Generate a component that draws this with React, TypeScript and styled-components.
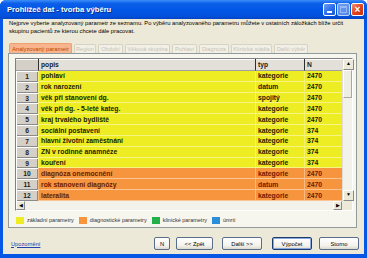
import { Fragment } from "react";
import styled, { createGlobalStyle } from "styled-components";

const GlobalStyle = createGlobalStyle`
  html, body {
    margin: 0;
    padding: 0;
    background: #ffffff;
  }
  body {
    font-family: "Liberation Sans", Arial, sans-serif;
  }
`;

const Window = styled.div`
  width: 367px;
  height: 258px;
  display: flex;
  flex-direction: column;
  border-radius: 6px 6px 0 0;
  overflow: hidden;
  background: #0757e6;
`;

const TitleBar = styled.div`
  height: 19px;
  flex: none;
  display: flex;
  align-items: center;
  padding: 0 3px 0 7px;
  background: linear-gradient(#3c8ef8 0%, #0b5fe9 18%, #0256e5 55%, #0150dc 85%, #0444c4 100%);
`;

const Title = styled.div`
  flex: 1;
  color: #ffffff;
  font-size: 7.6px;
  font-weight: bold;
  text-shadow: 1px 1px 0 #0a2d8c;
  white-space: nowrap;
`;

const CaptionButtons = styled.div`
  display: flex;
  gap: 1px;
`;

const CaptionButton = styled.div<{ $kind: "min" | "max" | "close" }>`
  width: 13px;
  height: 13px;
  box-sizing: border-box;
  border: 1px solid #ffffff;
  border-radius: 2px;
  position: relative;
  background: ${(p) =>
    p.$kind === "close"
      ? "linear-gradient(135deg, #f09070, #e0451c 50%, #c83010)"
      : p.$kind === "max"
      ? "linear-gradient(135deg, #8fb4f4, #6b98ec)"
      : "linear-gradient(135deg, #6fa0f6, #2a6be8 55%, #1d58d8)"};
  opacity: ${(p) => (p.$kind === "max" ? 0.75 : 1)};
`;

const MinBar = styled.div`
  position: absolute;
  left: 3px;
  bottom: 2px;
  width: 5px;
  height: 2px;
  background: #ffffff;
`;

const MaxBox = styled.div`
  position: absolute;
  left: 2px;
  top: 2px;
  width: 7px;
  height: 7px;
  box-sizing: border-box;
  border: 1px solid #c8d8f8;
  border-top-width: 2px;
`;

const CloseX = styled.div`
  position: absolute;
  inset: 0;
  color: #ffffff;
  font-size: 10px;
  font-weight: bold;
  line-height: 11px;
  text-align: center;
`;

const Frame = styled.div`
  flex: 1;
  display: flex;
  padding: 0 3px 4px 3px;
  background: #0757e6;
`;

const Body = styled.div`
  flex: 1;
  display: flex;
  flex-direction: column;
  background: #ece9d8;
  padding: 0 7px 0 5px;
`;

const Intro = styled.div`
  font-size: 5.8px;
  line-height: 8px;
  color: #000000;
  padding-left: 1px;
  white-space: nowrap;
`;

const Tabs = styled.div`
  display: flex;
  align-items: flex-end;
  height: 10px;
  margin-top: 8px;
  padding-left: 1px;
`;

const Tab = styled.div<{ $active?: boolean; $w: number }>`
  width: ${(p) => p.$w}px;
  height: ${(p) => (p.$active ? 10 : 9)}px;
  box-sizing: border-box;
  margin-right: 2px;
  font-size: 5.7px;
  line-height: ${(p) => (p.$active ? 10 : 9)}px;
  text-align: center;
  white-space: nowrap;
  border: 1px solid ${(p) => (p.$active ? "#f0a070" : "#d6d2c4")};
  border-bottom: none;
  border-radius: 2px 2px 0 0;
  background: ${(p) => (p.$active ? "#f8b48c" : "#f2f0e6")};
  color: ${(p) => (p.$active ? "#c04400" : "#c6c2b6")};
`;

const Panel = styled.div`
  height: 175px;
  box-sizing: border-box;
  border: 1px solid #919b9c;
  background: #f6f5ee;
  padding: 4px 3px 0 6px;
  display: flex;
  flex-direction: column;
`;

const Grid = styled.div`
  width: 338px;
  height: 153px;
  box-sizing: border-box;
  border: 1px solid;
  border-color: #808080 #ffffff #ffffff #808080;
  display: flex;
  flex-direction: column;
  background: #ffffff;
`;

const GridMain = styled.div`
  display: flex;
  height: 142px;
`;

const Table = styled.div`
  flex: 1;
  display: grid;
  grid-template-columns: 22px 217px 49px 1fr;
  grid-template-rows: 12px repeat(12, 1fr);
  background: #ffffff;
`;

const HeadCell = styled.div<{ $first?: boolean }>`
  background: ${(p) => (p.$first ? "#d4d0c8" : "#e2e0d9")};
  border-left: ${(p) => (p.$first ? "none" : "1px solid #303030")};
  border-bottom: 1px solid #a0a0a0;
  box-shadow: inset 0 1px 0 #ffffff;
  font-size: 6.7px;
  font-weight: bold;
  color: #202020;
  line-height: 11px;
  padding-left: 2px;
  white-space: nowrap;
`;

const NumCell = styled.div`
  background: #d4d0c8;
  box-shadow: inset 1px 1px 0 #ffffff, inset -1px -1px 0 #8a8a8a;
  font-size: 6.7px;
  font-weight: bold;
  color: #202020;
  display: flex;
  align-items: center;
  justify-content: center;
`;

const Cell = styled.div<{ $tone: "base" | "diag" }>`
  background: ${(p) => (p.$tone === "base" ? "#eeec22" : "#f6953e")};
  color: ${(p) => (p.$tone === "base" ? "#222200" : "#6e1a00")};
  border-bottom: 1px solid rgba(255, 255, 255, 0.45);
  border-left: 1px solid rgba(255, 255, 255, 0.35);
  font-size: 6.8px;
  font-weight: bold;
  padding-left: 2px;
  display: flex;
  align-items: center;
  white-space: nowrap;
  overflow: hidden;
`;

const VScroll = styled.div`
  width: 10px;
  display: flex;
  flex-direction: column;
  background: #f3f2ea;
  border-left: 1px solid #e0ded4;
  box-sizing: border-box;
`;

const HScroll = styled.div`
  flex: 1;
  display: flex;
  background: #f3f2ea;
`;

const ScrollRow = styled.div`
  display: flex;
  height: 9px;
`;

const ArrowBtn = styled.div<{ $size?: number }>`
  width: ${(p) => p.$size ?? 9}px;
  height: ${(p) => p.$size ?? 9}px;
  flex: none;
  box-sizing: border-box;
  background: #ece9d8;
  border: 1px solid;
  border-color: #ffffff #8a8a8a #8a8a8a #ffffff;
  color: #000000;
  font-size: 5px;
  line-height: 7px;
  text-align: center;
`;

const Thumb = styled.div`
  height: 28px;
  box-sizing: border-box;
  background: #eeede4;
  border: 1px solid;
  border-color: #ffffff #a8a8a0 #a8a8a0 #ffffff;
`;

const Fill = styled.div`
  flex: 1;
`;

const Corner = styled.div`
  width: 10px;
  background: #ece9d8;
`;

const Legend = styled.div`
  display: flex;
  align-items: center;
  height: 8px;
  margin-top: 5px;
  padding-left: 1px;
`;

const LegendItem = styled.div`
  display: flex;
  align-items: center;
  margin-right: 5px;
  font-size: 5.5px;
  color: #333333;
  white-space: nowrap;
`;

const Swatch = styled.div<{ $color: string }>`
  width: 8px;
  height: 7px;
  margin-right: 3px;
  background: ${(p) => p.$color};
`;

const Footer = styled.div`
  display: flex;
  align-items: center;
  margin-top: 9px;
  margin-right: -2px;
  padding-left: 3px;
`;

const Link = styled.a`
  font-size: 5.7px;
  color: #2040b0;
  text-decoration: underline;
  flex: 1;
`;

const Button = styled.div<{ $w: number; $gap: number; $default?: boolean }>`
  width: ${(p) => p.$w}px;
  height: 13px;
  margin-left: ${(p) => p.$gap}px;
  box-sizing: border-box;
  border: 1px solid ${(p) => (p.$default ? "#1c3c6c" : "#5a6e8c")};
  border-radius: 2px;
  background: linear-gradient(#ffffff, #f3f2ec 70%, #dcd8cc);
  box-shadow: ${(p) => (p.$default ? "inset 0 0 0 1px #8aa8e0" : "none")};
  font-size: 5.8px;
  color: #000000;
  display: flex;
  align-items: center;
  justify-content: center;
  white-space: nowrap;
`;

const rows: { name: string; type: string; n: string; tone: "base" | "diag" }[] = [
  { name: "pohlaví", type: "kategorie", n: "2470", tone: "base" },
  { name: "rok narození", type: "datum", n: "2470", tone: "base" },
  { name: "věk při stanovení dg.", type: "spojitý", n: "2470", tone: "base" },
  { name: "věk při dg. - 5-leté kateg.", type: "kategorie", n: "2470", tone: "base" },
  { name: "kraj trvalého bydliště", type: "kategorie", n: "2470", tone: "base" },
  { name: "sociální postavení", type: "kategorie", n: "374", tone: "base" },
  { name: "hlavní životní zaměstnání", type: "kategorie", n: "374", tone: "base" },
  { name: "ZN v rodinné anamnéze", type: "kategorie", n: "374", tone: "base" },
  { name: "kouření", type: "kategorie", n: "374", tone: "base" },
  { name: "diagnóza onemocnění", type: "kategorie", n: "2470", tone: "diag" },
  { name: "rok stanovení diagnózy", type: "datum", n: "2470", tone: "diag" },
  { name: "lateralita", type: "kategorie", n: "2470", tone: "diag" },
];

const tabs: [string, number][] = [
  ["Analyzovaný parametr", 63],
  ["Region", 22],
  ["Období", 25],
  ["Věková skupina", 45],
  ["Pohlaví", 25],
  ["Diagnóza", 30],
  ["Klinická stádia", 41],
  ["Další výběr", 34],
];

const legend: [string, string][] = [
  ["#eeec22", "základní parametry"],
  ["#f6953e", "diagnostické parametry"],
  ["#22b04a", "klinické parametry"],
  ["#2a8fd8", "úmrtí"],
];

export default function App() {
  return (
    <>
      <GlobalStyle />
      <Window>
        <TitleBar>
          <Title>Prohlížeč dat - tvorba výběru</Title>
          <CaptionButtons>
            <CaptionButton $kind="min">
              <MinBar />
            </CaptionButton>
            <CaptionButton $kind="max">
              <MaxBox />
            </CaptionButton>
            <CaptionButton $kind="close">
              <CloseX>×</CloseX>
            </CaptionButton>
          </CaptionButtons>
        </TitleBar>
        <Frame>
          <Body>
            <Intro>
              Nejprve vyberte analyzovaný parametr ze seznamu. Po výběru analyzovaného parametru můžete v ostatních záložkách blíže určit
              <br />
              skupinu pacientů ze kterou chcete dále pracovat.
            </Intro>
            <Tabs>
              {tabs.map(([label, w], i) => (
                <Tab key={label} $w={w} $active={i === 0}>
                  {label}
                </Tab>
              ))}
            </Tabs>
            <Panel>
              <Grid>
                <GridMain>
                  <Table>
                    <HeadCell $first />
                    <HeadCell>popis</HeadCell>
                    <HeadCell>typ</HeadCell>
                    <HeadCell>N</HeadCell>
                    {rows.map((r, i) => (
                      <Fragment key={r.name}>
                        <NumCell>{i + 1}</NumCell>
                        <Cell $tone={r.tone}>{r.name}</Cell>
                        <Cell $tone={r.tone}>{r.type}</Cell>
                        <Cell $tone={r.tone}>{r.n}</Cell>
                      </Fragment>
                    ))}
                  </Table>
                  <VScroll>
                    <ArrowBtn $size={11}>▲</ArrowBtn>
                    <Thumb />
                    <Fill />
                    <ArrowBtn $size={11}>▼</ArrowBtn>
                  </VScroll>
                </GridMain>
                <ScrollRow>
                  <HScroll>
                    <ArrowBtn>◀</ArrowBtn>
                    <Fill />
                    <ArrowBtn>▶</ArrowBtn>
                  </HScroll>
                  <Corner />
                </ScrollRow>
              </Grid>
              <Legend>
                {legend.map(([c, label]) => (
                  <LegendItem key={label}>
                    <Swatch $color={c} />
                    {label}
                  </LegendItem>
                ))}
              </Legend>
            </Panel>
            <Footer>
              <Link>Upozornění</Link>
              <Button $w={16} $gap={0}>N</Button>
              <Button $w={37} $gap={6}>&lt;&lt; Zpět</Button>
              <Button $w={40} $gap={9}>Další &gt;&gt;</Button>
              <Button $w={40} $gap={10} $default>Výpočet</Button>
              <Button $w={40} $gap={7}>Storno</Button>
            </Footer>
          </Body>
        </Frame>
      </Window>
    </>
  );
}
